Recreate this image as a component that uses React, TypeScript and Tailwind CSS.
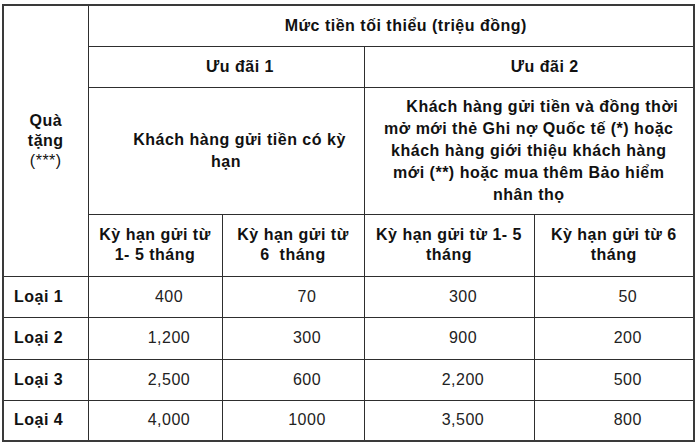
const rows = [
  ["Loại 1", "400", "70", "300", "50"],
  ["Loại 2", "1,200", "300", "900", "200"],
  ["Loại 3", "2,500", "600", "2,200", "500"],
  ["Loại 4", "4,000", "1000", "3,500", "800"],
];

const cell = "border border-[#2e2e2e] p-0 align-middle";

export default function App() {
  return (
    <div className="h-[443px] w-[700px] bg-white pl-[2px] pt-[4px] font-['Liberation_Sans',Arial,sans-serif] text-[16px] tracking-[0.5px] text-[#111]">
      <table className="w-[691px] table-fixed border-collapse border-2 border-[#3a3a3a]">
        <colgroup>
          <col className="w-[85px]" />
          <col className="w-[134px]" />
          <col className="w-[142px]" />
          <col className="w-[170px]" />
          <col className="w-[160px]" />
        </colgroup>
        <tbody>
          <tr className="h-[41px]">
            <td rowSpan={4} className={`${cell} text-center font-bold leading-[20px]`}>
              Quà
              <br />
              tặng
              <br />
              <span className="font-normal">(***)</span>
            </td>
            <td colSpan={4} className={`${cell} pl-[30px] text-center font-bold`}>
              Mức tiền tối thiểu (triệu đồng)
            </td>
          </tr>
          <tr className="h-[41px]">
            <td colSpan={2} className={`${cell} pl-[28px] text-center font-bold`}>
              Ưu đãi 1
            </td>
            <td colSpan={2} className={`${cell} pl-[32px] text-center font-bold`}>
              Ưu đãi 2
            </td>
          </tr>
          <tr className="h-[127px]">
            <td colSpan={2} className={`${cell} whitespace-nowrap px-1 text-center font-bold leading-[22px]`}>
              <span className="inline-block w-[27px]" />
              Khách hàng gửi tiền có kỳ
              <br />
              hạn
            </td>
            <td colSpan={2} className={`${cell} whitespace-nowrap px-1 text-center font-bold leading-[22px]`}>
              <span className="inline-block w-[27px]" />
              Khách hàng gửi tiền và đồng thời
              <br />
              mở mới thẻ Ghi nợ Quốc tế (*) hoặc
              <br />
              khách hàng giới thiệu khách hàng
              <br />
              mới (**) hoặc mua thêm Bảo hiểm
              <br />
              nhân thọ
            </td>
          </tr>
          <tr className="h-[62px] whitespace-nowrap font-bold leading-[20px]">
            <td className={`${cell} text-center`}>
              Kỳ hạn gửi từ
              <br />
              1- 5 tháng
            </td>
            <td className={`${cell} text-center`}>
              Kỳ hạn gửi từ
              <br />
              6{"\u00a0"} tháng
            </td>
            <td className={`${cell} text-center`}>
              Kỳ hạn gửi từ 1- 5
              <br />
              tháng
            </td>
            <td className={`${cell} text-center`}>
              Kỳ hạn gửi từ 6
              <br />
              tháng
            </td>
          </tr>
          {rows.map((r, i) => (
            <tr key={r[0]} className={i === 1 ? "h-[42px]" : "h-[41px]"}>
              <td className={`${cell} pl-[10px] font-bold`}>{r[0]}</td>
              {r.slice(1).map((v, j) => (
                <td key={j} className={`${cell} pl-[28px] text-center text-[#222]`}>
                  {v}
                </td>
              ))}
            </tr>
          ))}
        </tbody>
      </table>
    </div>
  );
}
